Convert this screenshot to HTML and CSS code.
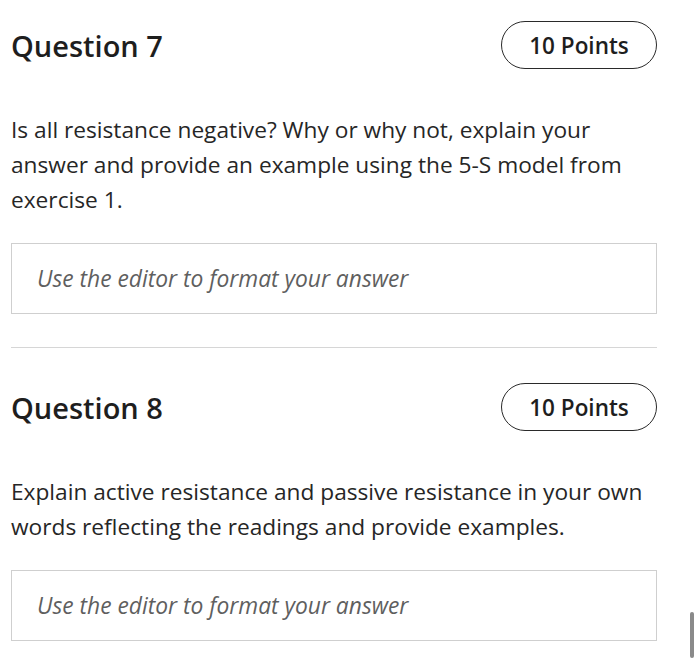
FILE: index.html
```html
<!DOCTYPE html>
<html>
<head>
<meta charset="utf-8">
<link rel="stylesheet" href="styles.css">
</head>
<body>
<main class="page">
  <section class="question">
    <header class="q-head">
      <h2 class="q-title">Question 7</h2>
      <span class="points">10 Points</span>
    </header>
    <p class="q-text">Is all resistance negative? Why or why not, explain your answer and provide an example using the 5-S model from exercise 1.</p>
    <div class="answer">Use the editor to format your answer</div>
  </section>
  <hr class="divider">
  <section class="question">
    <header class="q-head">
      <h2 class="q-title">Question 8</h2>
      <span class="points">10 Points</span>
    </header>
    <p class="q-text">Explain active resistance and passive resistance in your own words reflecting the readings and provide examples.</p>
    <div class="answer">Use the editor to format your answer</div>
  </section>
</main>
<div class="scrollbar"></div>
</body>
</html>
```
FILE: styles.css
```css
html, body {
  margin: 0;
  padding: 0;
  background: #fff;
}
body {
  font-family: "Open Sans", "Noto Sans", sans-serif;
  color: #222;
  overflow: hidden;
}
.page {
  width: 646px;
  padding: 21px 0 0 11px;
}
.q-head {
  display: flex;
  justify-content: space-between;
  align-items: center;
  height: 48px;
}
.q-title {
  margin: 0;
  font-size: 29px;
  font-weight: 600;
  color: #1e1e1e;
}
.points {
  box-sizing: border-box;
  width: 156px;
  height: 48px;
  border: 1.5px solid #2a2a2a;
  border-radius: 24px;
  display: flex;
  align-items: center;
  justify-content: center;
  font-size: 22.5px;
  font-weight: 600;
  color: #1e1e1e;
}
.q-text {
  margin: 43px 0 0;
  font-size: 22.7px;
  line-height: 35px;
  color: #262626;
}
.answer {
  box-sizing: border-box;
  margin-top: 26px;
  height: 71px;
  border: 1.5px solid #cfcfcf;
  padding-left: 25px;
  display: flex;
  align-items: center;
  font-style: italic;
  font-size: 22.8px;
  color: #5f5f5f;
}
.divider {
  border: 0;
  border-top: 1.5px solid #d6d6d6;
  margin: 33px 0 35px;
}
.scrollbar {
  position: fixed;
  left: 690px;
  top: 612px;
  width: 4px;
  height: 46px;
  border-radius: 2px;
  background: #8a8a8a;
}
```
